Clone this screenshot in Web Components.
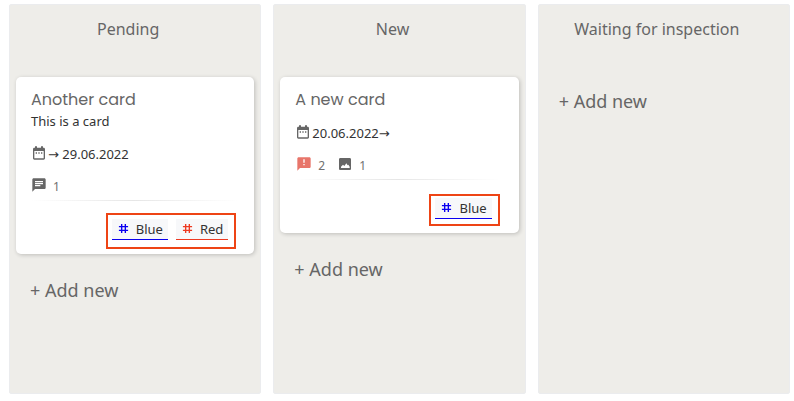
<!DOCTYPE html>
<html lang="en">
<head>
<meta charset="utf-8">
<title>Board</title>
<style>
body { margin: 0; background: #fff; color: #333; font: 13px/20px "Noto Sans", "DejaVu Sans", sans-serif; }
</style>
</head>
<body>
<kanban-board>
  <kanban-column heading="Pending">
    <kanban-card heading="Another card">
      <span slot="description">This is a card</span>
      <card-date slot="date">→ 29.06.2022</card-date>
      <card-count slot="counts" icon="comment" label="Comments">1</card-count>
      <tag-list slot="tags">
        <card-tag color="#0a00f0">Blue</card-tag>
        <card-tag color="#ee3a22">Red</card-tag>
      </tag-list>
    </kanban-card>
  </kanban-column>
  <kanban-column heading="New">
    <kanban-card heading="A new card">
      <card-date slot="date">20.06.2022→</card-date>
      <card-count slot="counts" icon="alert" label="Alerts">2</card-count>
      <card-count slot="counts" icon="image" label="Images">1</card-count>
      <tag-list slot="tags" compact>
        <card-tag color="#0a00f0">Blue</card-tag>
      </tag-list>
    </kanban-card>
  </kanban-column>
  <kanban-column heading="Waiting for inspection"></kanban-column>
</kanban-board>
<script>
const ICONS = {
  date: '<path d="M9 11H7v2h2v-2zm4 0h-2v2h2v-2zm4 0h-2v2h2v-2zm2-7h-1V2h-3v2H9V2H6v2H5c-1.100 0-2 .9-2 2v14c0 1.100.9 2 2 2h14c1.100 0 2-.9 2-2V6c0-1.100-.9-2-2-2zm0 16H5V9h14v11z"/>',
  comment: '<path d="M20 2H4c-1.100 0-2 .9-2 2v18l4-4h14c1.100 0 2-.9 2-2V4c0-1.100-.9-2-2-2zM6 9h12v2H6V9zm8 5H6v-2h8v2zm4-6H6V6h12v2z"/>',
  alert: '<path d="M20 2H4c-1.100 0-2 .9-2 2v18l4-4h14c1.100 0 2-.9 2-2V4c0-1.100-.9-2-2-2zm-7 12h-2v-2h2v2zm0-4h-2V5h2v5z"/>',
  image: '<path d="M21 19V5c0-1.100-.9-2-2-2H5c-1.100 0-2 .9-2 2v14c0 1.100.9 2 2 2h14c1.100 0 2-.9 2-2zM6 18v-2l3-3 2 2 3-4 2 3 1-1 2 3v2z"/>',
  hash: '<path d="M8 2v20M16 2v20M2 8h20M2 16h20" fill="none" stroke="currentColor" stroke-width="3"/>'
};
const icon = (name, size) =>
  `<svg width="${size}" height="${size}" viewBox="0 0 24 24" fill="currentColor" aria-hidden="true">${ICONS[name]}</svg>`;

class Base extends HTMLElement {
  connectedCallback() {
    if (!this.shadowRoot) this.attachShadow({ mode: "open" }).innerHTML = this.view();
  }
}

customElements.define("kanban-board", class extends Base {
  view() {
    return `<style>
      :host { display: grid; grid-template-columns: repeat(3, minmax(0, 1fr)); gap: 12px;
        box-sizing: border-box; min-height: 100vh; padding: 4px 4px 7px 9px; }
    </style><slot></slot>`;
  }
});

customElements.define("kanban-column", class extends Base {
  view() {
    return `<style>
      :host { display: flex; flex-direction: column; box-sizing: border-box;
        padding: 0 7px; background: #eeede9; border-radius: 3px; box-shadow: inset 0 0 0 1px #ebecee; }
      h2 { margin: 0; padding: 15px 14px 38px 0;
        font-size: 16px; line-height: 20px; font-weight: 400; text-align: center; color: #666; }
      button { align-self: flex-start; margin: 11px 0; padding: 0 14px; border: 0; background: none;
        font: 18px/26px "Noto Sans", sans-serif; color: #666; cursor: pointer; }
      ::slotted(kanban-card) { margin-bottom: 12px; }
    </style>
    <h2>${this.getAttribute("heading")}</h2>
    <slot></slot>
    <button type="button">+ Add new</button>`;
  }
});

customElements.define("kanban-card", class extends Base {
  view() {
    return `<style>
      :host { display: flex; flex-direction: column; background: #fff; border-radius: 5px;
        box-shadow: 1px 1px 4px rgba(0, 0, 0, .2); }
      h3 { margin: 12px 15px 0; font: 400 16px/22px Poppins, Inter, sans-serif; color: #666; }
      .description { display: block; margin: 0 15px; }
      .counts { display: flex; gap: 12px; margin: 10px 15px 0; height: 24px; }
      hr { width: 206px; max-width: 90%; height: 1px; margin: 1px 15px 0; border: 0;
        background: linear-gradient(90deg, transparent, #e6e6e6, transparent); }
      ::slotted([slot="description"]) { display: block; line-height: 21px; }
      ::slotted([slot="date"]) { margin: 11px 15px 0; }
    </style>
    <h3>${this.getAttribute("heading")}</h3>
    <div class="description"><slot name="description"></slot></div>
    <slot name="date"></slot>
    <div class="counts"><slot name="counts"></slot></div>
    <hr>
    <slot name="tags"></slot>`;
  }
});

customElements.define("card-date", class extends Base {
  view() {
    return `<style>
      :host { display: flex; align-items: center; gap: 1px; height: 22px; font-size: 13px; }
      svg { color: #666; margin-bottom: 2px; }
    </style>${icon("date", 16)}<span><slot></slot></span>`;
  }
});

customElements.define("card-count", class extends Base {
  view() {
    return `<style>
      :host { display: flex; align-items: center; gap: 6px; height: 24px; font-size: 12px; color: #707070; }
      :host([icon="alert"]) { padding-left: 1px; }
      svg { color: #666; margin-bottom: 4px; }
      :host([icon="alert"]) svg { color: #e8756a; }
    </style>${icon(this.getAttribute("icon"), 16)}<span><slot></slot></span>`;
  }
});

customElements.define("tag-list", class extends Base {
  view() {
    return `<style>
      :host { display: flex; gap: 8px; align-self: flex-end; margin: 12px 18px 5px;
        padding: 4px 6px 7px 4px; border: 2px solid #ee4415; }
      :host([compact]) { margin: 14px 19px 7px; padding: 2px 6px 5px 4px; }
    </style><slot></slot>`;
  }
});

customElements.define("card-tag", class extends Base {
  view() {
    const color = this.getAttribute("color");
    return `<style>
      :host { display: flex; align-items: center; gap: 7px; padding: 0 5px 0 6px; height: 20px;
        font-size: 13px; background: #f7f8fa; border-bottom: 1px solid ${color}; }
      svg { color: ${color}; margin-bottom: 1px; }
    </style>${icon("hash", 11)}<span><slot></slot></span>`;
  }
});
</script>
</body>
</html>
